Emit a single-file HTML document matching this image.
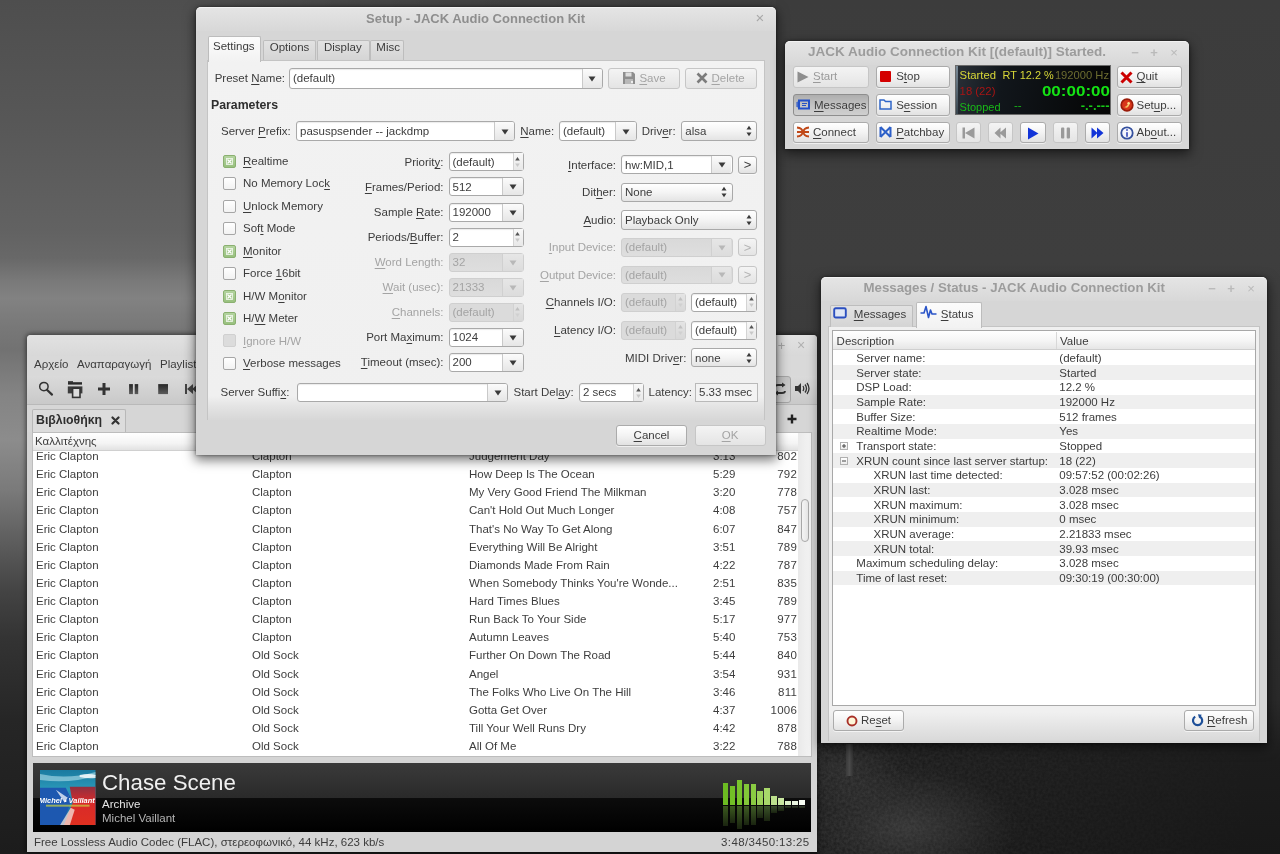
<!DOCTYPE html><html><head><meta charset="utf-8"><style>
*{margin:0;padding:0;box-sizing:border-box}
html,body{width:1280px;height:854px;overflow:hidden}
body{position:relative;font-family:"Liberation Sans",sans-serif;background:#3c3c3c}
.t{position:absolute;white-space:nowrap}
.b{position:absolute}
u{text-decoration:underline;text-decoration-thickness:1px;text-underline-offset:1.5px}
</style></head><body><div id="root" style="position:absolute;left:0;top:0;width:1280px;height:854px;overflow:hidden;filter:blur(0.35px);"><div class="b " style="left:0px;top:0px;width:1280px;height:854px;background:linear-gradient(to bottom,#4e4e4e 0,#575757 120px,#626262 230px,#686868 258px,#7a7a7a 282px,#828282 298px,#777 330px,#727272 350px,#848484 395px,#8c8c8c 440px,#7a7a7a 490px,#5e5e5e 540px,#444 590px,#333 640px,#262626 720px,#1c1c1c 854px);"></div>
<div class="b " style="left:0px;top:0px;width:1280px;height:854px;background:linear-gradient(to right,rgba(0,0,0,0) 0,rgba(0,0,0,0) 200px,rgba(0,0,0,.14) 450px,rgba(0,0,0,.2) 776px,rgba(0,0,0,.22) 1280px);"></div>
<div class="b " style="left:776px;top:0px;width:504px;height:854px;background:linear-gradient(to bottom,#3c3c3c 0,#3e3e3e 260px,#363636 480px,#2a2a2a 700px,#1c1c1c 760px,#181818 854px);"></div>
<div class="b " style="left:817px;top:743px;width:463px;height:111px;background:radial-gradient(ellipse 110px 60px at 90px 85px,rgba(85,85,85,.45),rgba(0,0,0,0)),radial-gradient(ellipse 60px 40px at 30px 30px,rgba(70,70,70,.35),rgba(0,0,0,0));"></div>
<svg class="b" style="left:817px;top:743px" width="463" height="111"><filter id="nz"><feTurbulence type="fractalNoise" baseFrequency="0.35" numOctaves="2" seed="3"/><feColorMatrix values="0 0 0 0 1  0 0 0 0 1  0 0 0 0 1  0 0 0 .5 -.1"/></filter><defs><linearGradient id="nzg" x1="0" y1="0" x2="1" y2="0"><stop offset="0" stop-color="#fff"/><stop offset=".45" stop-color="#888"/><stop offset="1" stop-color="#000"/></linearGradient><mask id="nzm"><rect width="463" height="111" fill="url(#nzg)"/></mask></defs><rect width="463" height="111" filter="url(#nz)" opacity=".25" mask="url(#nzm)"/></svg>
<div class="b " style="left:846px;top:744px;width:7px;height:32px;background:linear-gradient(to right,#3a3a3a,#4a4a4a,#333);"></div>
<div class="b " style="left:27px;top:335px;width:790px;height:516.5px;background:#d4d4d4;border-radius:4px 4px 0 0;box-shadow:0 0 5px 1px rgba(0,0,0,.55);"></div>
<div class="b " style="left:27px;top:335px;width:790px;height:21px;background:linear-gradient(#e2e2e2,#d8d8d8);border-radius:4px 4px 0 0;"></div>
<div class="t" style="top:337.00px;font-size:13px;line-height:17px;color:#a8a8a8;left:771.5px;width:20px;text-align:center;">+</div>
<div class="t" style="top:336.00px;font-size:14px;line-height:18px;color:#b0b0b0;left:791.0px;width:20px;text-align:center;">×</div>
<div class="b " style="left:27px;top:356px;width:790px;height:20px;background:#d9d9d9;"></div>
<div class="t" style="top:357.00px;font-size:11.5px;line-height:14px;color:#3c3c3c;left:34px;">Αρχείο</div>
<div class="t" style="top:357.00px;font-size:11.5px;line-height:14px;color:#3c3c3c;left:77px;">Αναπαραγωγή</div>
<div class="t" style="top:357.00px;font-size:11.5px;line-height:14px;color:#3c3c3c;left:160px;">Playlist</div>
<div class="b " style="left:27px;top:376px;width:790px;height:29px;background:linear-gradient(#dadada,#c9c9c9);border-bottom:1px solid #b9b9b9;"></div>
<svg class="b" style="left:37px;top:380px" width="18" height="18" viewBox="0 0 18 18"><circle cx="6.9" cy="6.6" r="4.2" fill="none" stroke="#333" stroke-width="1.5"/><path d="M9.9 9.8 L15 14.6" stroke="#333" stroke-width="2.2" stroke-linecap="round"/></svg>
<svg class="b" style="left:64px;top:378px" width="22" height="22" viewBox="0 0 22 22"><rect x="4" y="3.2" width="5" height="1.5" fill="#2a2a2a"/><rect x="4" y="4.2" width="14" height="2.4" fill="#2a2a2a"/><rect x="3.8" y="8.4" width="14.6" height="7" fill="#3c3c3c"/><rect x="8.6" y="10.2" width="7.4" height="9.2" fill="#dcdcdc" stroke="#333" stroke-width="1.6"/></svg>
<svg class="b" style="left:95px;top:380px" width="18" height="18" viewBox="0 0 18 18"><path d="M9 3v12M3 9h12" stroke="#333" stroke-width="3"/></svg>
<svg class="b" style="left:125px;top:380px" width="18" height="18" viewBox="0 0 18 18"><defs><linearGradient id="pg" x1="0" y1="0" x2="0" y2="1"><stop offset="0" stop-color="#262626"/><stop offset="1" stop-color="#5a5a5a"/></linearGradient></defs><rect x="4.1" y="4.1" width="3.8" height="10" fill="url(#pg)"/><rect x="9.7" y="4.1" width="3.5" height="10" fill="url(#pg)"/></svg>
<svg class="b" style="left:154px;top:380px" width="18" height="18" viewBox="0 0 18 18"><defs><linearGradient id="stg" x1="0" y1="0" x2="0" y2="1"><stop offset="0" stop-color="#282828"/><stop offset="1" stop-color="#5c5c5c"/></linearGradient></defs><rect x="4.2" y="4.1" width="9.8" height="10" fill="url(#stg)"/></svg>
<svg class="b" style="left:183px;top:380px" width="18" height="18" viewBox="0 0 18 18"><rect x="2" y="4" width="2" height="10" fill="#444"/><path d="M4 9l6-5v10z M9 9l6-5v10z" fill="#444"/></svg>
<div class="b " style="left:768px;top:375.5px;width:22.5px;height:27.5px;background:linear-gradient(#c4c4c4,#cdcdcd 70%,#d2d2d2);border:1px solid #a6a6a6;border-radius:3px;"></div>
<svg class="b" style="left:772px;top:381px" width="16" height="16" viewBox="0 0 16 16"><path d="M3 6Q3 4 6 4H11M13 10Q13 12 10 12H5" fill="none" stroke="#333" stroke-width="1.8"/><path d="M10 1.5L13.5 4L10 6.5Z M6 9.5L2.5 12L6 14.5Z" fill="#333"/></svg>
<svg class="b" style="left:794px;top:381px" width="16" height="15" viewBox="0 0 16 15"><path d="M1 5h3l3-3v11l-3-3H1z" fill="#333"/><path d="M9 5q1.5 2.5 0 5M11 3.5q3 4 0 8M13 2q4 5.5 0 11" fill="none" stroke="#333" stroke-width="1.3"/></svg>
<div class="b " style="left:27px;top:405px;width:790px;height:27px;background:#d6d6d6;"></div>
<div class="b " style="left:32px;top:409px;width:94px;height:24px;background:#dcdcdc;border:1px solid #b8b8b8;border-bottom:none;border-radius:2px 2px 0 0;"></div>
<div class="t" style="top:412.00px;font-size:12.3px;line-height:16px;color:#2e2e2e;font-weight:bold;left:36px;">Βιβλιοθήκη</div>
<svg class="b" style="left:110.5px;top:415.5px" width="9" height="9" viewBox="0 0 9 9"><path d="M1.5 1.5L7.5 7.5M7.5 1.5L1.5 7.5" stroke="#333" stroke-width="2.2" stroke-linecap="round"/></svg>
<svg class="b" style="left:786px;top:413px" width="12" height="12" viewBox="0 0 12 12"><path d="M6 1.5v9M1.5 6h9" stroke="#222" stroke-width="2.4"/></svg>
<div class="b " style="left:32px;top:432px;width:780px;height:325px;background:#fff;border:1px solid #bdbdbd;"></div>
<div class="b " style="left:33px;top:433px;width:765px;height:18px;background:linear-gradient(#ffffff,#f4f4f4 60%,#e2e2e2);border-bottom:1px solid #d0d0d0;"></div>
<div class="t" style="top:434.00px;font-size:11.5px;line-height:14px;color:#3c3c3c;left:35px;">Καλλιτέχνης</div>
<div class="t" style="top:449.00px;font-size:11.5px;line-height:14px;color:#3e3e3e;left:36px;">Eric Clapton</div>
<div class="t" style="top:449.00px;font-size:11.5px;line-height:14px;color:#3e3e3e;left:252px;">Clapton</div>
<div class="t" style="top:449.00px;font-size:11.5px;line-height:14px;color:#3e3e3e;left:469px;">Judgement Day</div>
<div class="t" style="top:449.00px;font-size:11.5px;line-height:14px;color:#3e3e3e;left:713px;">3:13</div>
<div class="t" style="top:449.00px;font-size:11.5px;line-height:14px;color:#3e3e3e;left:757px;width:40px;text-align:right;letter-spacing:0.2px;">802</div>
<div class="t" style="top:467.00px;font-size:11.5px;line-height:14px;color:#3e3e3e;left:36px;">Eric Clapton</div>
<div class="t" style="top:467.00px;font-size:11.5px;line-height:14px;color:#3e3e3e;left:252px;">Clapton</div>
<div class="t" style="top:467.00px;font-size:11.5px;line-height:14px;color:#3e3e3e;left:469px;">How Deep Is The Ocean</div>
<div class="t" style="top:467.00px;font-size:11.5px;line-height:14px;color:#3e3e3e;left:713px;">5:29</div>
<div class="t" style="top:467.00px;font-size:11.5px;line-height:14px;color:#3e3e3e;left:757px;width:40px;text-align:right;letter-spacing:0.2px;">792</div>
<div class="t" style="top:485.00px;font-size:11.5px;line-height:14px;color:#3e3e3e;left:36px;">Eric Clapton</div>
<div class="t" style="top:485.00px;font-size:11.5px;line-height:14px;color:#3e3e3e;left:252px;">Clapton</div>
<div class="t" style="top:485.00px;font-size:11.5px;line-height:14px;color:#3e3e3e;left:469px;">My Very Good Friend The Milkman</div>
<div class="t" style="top:485.00px;font-size:11.5px;line-height:14px;color:#3e3e3e;left:713px;">3:20</div>
<div class="t" style="top:485.00px;font-size:11.5px;line-height:14px;color:#3e3e3e;left:757px;width:40px;text-align:right;letter-spacing:0.2px;">778</div>
<div class="t" style="top:503.00px;font-size:11.5px;line-height:14px;color:#3e3e3e;left:36px;">Eric Clapton</div>
<div class="t" style="top:503.00px;font-size:11.5px;line-height:14px;color:#3e3e3e;left:252px;">Clapton</div>
<div class="t" style="top:503.00px;font-size:11.5px;line-height:14px;color:#3e3e3e;left:469px;">Can't Hold Out Much Longer</div>
<div class="t" style="top:503.00px;font-size:11.5px;line-height:14px;color:#3e3e3e;left:713px;">4:08</div>
<div class="t" style="top:503.00px;font-size:11.5px;line-height:14px;color:#3e3e3e;left:757px;width:40px;text-align:right;letter-spacing:0.2px;">757</div>
<div class="t" style="top:522.00px;font-size:11.5px;line-height:14px;color:#3e3e3e;left:36px;">Eric Clapton</div>
<div class="t" style="top:522.00px;font-size:11.5px;line-height:14px;color:#3e3e3e;left:252px;">Clapton</div>
<div class="t" style="top:522.00px;font-size:11.5px;line-height:14px;color:#3e3e3e;left:469px;">That's No Way To Get Along</div>
<div class="t" style="top:522.00px;font-size:11.5px;line-height:14px;color:#3e3e3e;left:713px;">6:07</div>
<div class="t" style="top:522.00px;font-size:11.5px;line-height:14px;color:#3e3e3e;left:757px;width:40px;text-align:right;letter-spacing:0.2px;">847</div>
<div class="t" style="top:540.00px;font-size:11.5px;line-height:14px;color:#3e3e3e;left:36px;">Eric Clapton</div>
<div class="t" style="top:540.00px;font-size:11.5px;line-height:14px;color:#3e3e3e;left:252px;">Clapton</div>
<div class="t" style="top:540.00px;font-size:11.5px;line-height:14px;color:#3e3e3e;left:469px;">Everything Will Be Alright</div>
<div class="t" style="top:540.00px;font-size:11.5px;line-height:14px;color:#3e3e3e;left:713px;">3:51</div>
<div class="t" style="top:540.00px;font-size:11.5px;line-height:14px;color:#3e3e3e;left:757px;width:40px;text-align:right;letter-spacing:0.2px;">789</div>
<div class="t" style="top:558.00px;font-size:11.5px;line-height:14px;color:#3e3e3e;left:36px;">Eric Clapton</div>
<div class="t" style="top:558.00px;font-size:11.5px;line-height:14px;color:#3e3e3e;left:252px;">Clapton</div>
<div class="t" style="top:558.00px;font-size:11.5px;line-height:14px;color:#3e3e3e;left:469px;">Diamonds Made From Rain</div>
<div class="t" style="top:558.00px;font-size:11.5px;line-height:14px;color:#3e3e3e;left:713px;">4:22</div>
<div class="t" style="top:558.00px;font-size:11.5px;line-height:14px;color:#3e3e3e;left:757px;width:40px;text-align:right;letter-spacing:0.2px;">787</div>
<div class="t" style="top:576.00px;font-size:11.5px;line-height:14px;color:#3e3e3e;left:36px;">Eric Clapton</div>
<div class="t" style="top:576.00px;font-size:11.5px;line-height:14px;color:#3e3e3e;left:252px;">Clapton</div>
<div class="t" style="top:576.00px;font-size:11.5px;line-height:14px;color:#3e3e3e;left:469px;">When Somebody Thinks You're Wonde...</div>
<div class="t" style="top:576.00px;font-size:11.5px;line-height:14px;color:#3e3e3e;left:713px;">2:51</div>
<div class="t" style="top:576.00px;font-size:11.5px;line-height:14px;color:#3e3e3e;left:757px;width:40px;text-align:right;letter-spacing:0.2px;">835</div>
<div class="t" style="top:594.00px;font-size:11.5px;line-height:14px;color:#3e3e3e;left:36px;">Eric Clapton</div>
<div class="t" style="top:594.00px;font-size:11.5px;line-height:14px;color:#3e3e3e;left:252px;">Clapton</div>
<div class="t" style="top:594.00px;font-size:11.5px;line-height:14px;color:#3e3e3e;left:469px;">Hard Times Blues</div>
<div class="t" style="top:594.00px;font-size:11.5px;line-height:14px;color:#3e3e3e;left:713px;">3:45</div>
<div class="t" style="top:594.00px;font-size:11.5px;line-height:14px;color:#3e3e3e;left:757px;width:40px;text-align:right;letter-spacing:0.2px;">789</div>
<div class="t" style="top:612.00px;font-size:11.5px;line-height:14px;color:#3e3e3e;left:36px;">Eric Clapton</div>
<div class="t" style="top:612.00px;font-size:11.5px;line-height:14px;color:#3e3e3e;left:252px;">Clapton</div>
<div class="t" style="top:612.00px;font-size:11.5px;line-height:14px;color:#3e3e3e;left:469px;">Run Back To Your Side</div>
<div class="t" style="top:612.00px;font-size:11.5px;line-height:14px;color:#3e3e3e;left:713px;">5:17</div>
<div class="t" style="top:612.00px;font-size:11.5px;line-height:14px;color:#3e3e3e;left:757px;width:40px;text-align:right;letter-spacing:0.2px;">977</div>
<div class="t" style="top:630.00px;font-size:11.5px;line-height:14px;color:#3e3e3e;left:36px;">Eric Clapton</div>
<div class="t" style="top:630.00px;font-size:11.5px;line-height:14px;color:#3e3e3e;left:252px;">Clapton</div>
<div class="t" style="top:630.00px;font-size:11.5px;line-height:14px;color:#3e3e3e;left:469px;">Autumn Leaves</div>
<div class="t" style="top:630.00px;font-size:11.5px;line-height:14px;color:#3e3e3e;left:713px;">5:40</div>
<div class="t" style="top:630.00px;font-size:11.5px;line-height:14px;color:#3e3e3e;left:757px;width:40px;text-align:right;letter-spacing:0.2px;">753</div>
<div class="t" style="top:648.00px;font-size:11.5px;line-height:14px;color:#3e3e3e;left:36px;">Eric Clapton</div>
<div class="t" style="top:648.00px;font-size:11.5px;line-height:14px;color:#3e3e3e;left:252px;">Old Sock</div>
<div class="t" style="top:648.00px;font-size:11.5px;line-height:14px;color:#3e3e3e;left:469px;">Further On Down The Road</div>
<div class="t" style="top:648.00px;font-size:11.5px;line-height:14px;color:#3e3e3e;left:713px;">5:44</div>
<div class="t" style="top:648.00px;font-size:11.5px;line-height:14px;color:#3e3e3e;left:757px;width:40px;text-align:right;letter-spacing:0.2px;">840</div>
<div class="t" style="top:667.00px;font-size:11.5px;line-height:14px;color:#3e3e3e;left:36px;">Eric Clapton</div>
<div class="t" style="top:667.00px;font-size:11.5px;line-height:14px;color:#3e3e3e;left:252px;">Old Sock</div>
<div class="t" style="top:667.00px;font-size:11.5px;line-height:14px;color:#3e3e3e;left:469px;">Angel</div>
<div class="t" style="top:667.00px;font-size:11.5px;line-height:14px;color:#3e3e3e;left:713px;">3:54</div>
<div class="t" style="top:667.00px;font-size:11.5px;line-height:14px;color:#3e3e3e;left:757px;width:40px;text-align:right;letter-spacing:0.2px;">931</div>
<div class="t" style="top:685.00px;font-size:11.5px;line-height:14px;color:#3e3e3e;left:36px;">Eric Clapton</div>
<div class="t" style="top:685.00px;font-size:11.5px;line-height:14px;color:#3e3e3e;left:252px;">Old Sock</div>
<div class="t" style="top:685.00px;font-size:11.5px;line-height:14px;color:#3e3e3e;left:469px;">The Folks Who Live On The Hill</div>
<div class="t" style="top:685.00px;font-size:11.5px;line-height:14px;color:#3e3e3e;left:713px;">3:46</div>
<div class="t" style="top:685.00px;font-size:11.5px;line-height:14px;color:#3e3e3e;left:757px;width:40px;text-align:right;letter-spacing:0.2px;">811</div>
<div class="t" style="top:703.00px;font-size:11.5px;line-height:14px;color:#3e3e3e;left:36px;">Eric Clapton</div>
<div class="t" style="top:703.00px;font-size:11.5px;line-height:14px;color:#3e3e3e;left:252px;">Old Sock</div>
<div class="t" style="top:703.00px;font-size:11.5px;line-height:14px;color:#3e3e3e;left:469px;">Gotta Get Over</div>
<div class="t" style="top:703.00px;font-size:11.5px;line-height:14px;color:#3e3e3e;left:713px;">4:37</div>
<div class="t" style="top:703.00px;font-size:11.5px;line-height:14px;color:#3e3e3e;left:757px;width:40px;text-align:right;letter-spacing:0.2px;">1006</div>
<div class="t" style="top:721.00px;font-size:11.5px;line-height:14px;color:#3e3e3e;left:36px;">Eric Clapton</div>
<div class="t" style="top:721.00px;font-size:11.5px;line-height:14px;color:#3e3e3e;left:252px;">Old Sock</div>
<div class="t" style="top:721.00px;font-size:11.5px;line-height:14px;color:#3e3e3e;left:469px;">Till Your Well Runs Dry</div>
<div class="t" style="top:721.00px;font-size:11.5px;line-height:14px;color:#3e3e3e;left:713px;">4:42</div>
<div class="t" style="top:721.00px;font-size:11.5px;line-height:14px;color:#3e3e3e;left:757px;width:40px;text-align:right;letter-spacing:0.2px;">878</div>
<div class="t" style="top:739.00px;font-size:11.5px;line-height:14px;color:#3e3e3e;left:36px;">Eric Clapton</div>
<div class="t" style="top:739.00px;font-size:11.5px;line-height:14px;color:#3e3e3e;left:252px;">Old Sock</div>
<div class="t" style="top:739.00px;font-size:11.5px;line-height:14px;color:#3e3e3e;left:469px;">All Of Me</div>
<div class="t" style="top:739.00px;font-size:11.5px;line-height:14px;color:#3e3e3e;left:713px;">3:22</div>
<div class="t" style="top:739.00px;font-size:11.5px;line-height:14px;color:#3e3e3e;left:757px;width:40px;text-align:right;letter-spacing:0.2px;">788</div>
<div class="b " style="left:798px;top:433px;width:13px;height:323px;background:linear-gradient(to right,#e9e9e9,#f4f4f4);"></div>
<div class="b " style="left:801px;top:499px;width:8px;height:43px;background:linear-gradient(to right,#f4f4f4,#e6e6e6);border:1px solid #a8a8a8;border-radius:4px;"></div>
<div class="b " style="left:32px;top:757px;width:780px;height:6px;background:#d4d4d4;"></div>
<div class="b " style="left:33px;top:763px;width:778px;height:69px;background:linear-gradient(#3a3a3a 0,#2a2a2a 50%,#0c0c0c 50.5%,#000 100%);"></div>
<svg class="b" style="left:40px;top:769.5px" width="55.5" height="55.5" viewBox="0 0 56 56"><defs><linearGradient id="ag" x1="0" y1="0" x2="0" y2="1"><stop offset="0" stop-color="#1a7aa0"/><stop offset=".35" stop-color="#2a98b8"/><stop offset="1" stop-color="#1a5aa0"/></linearGradient><linearGradient id="rg" x1="0" y1="0" x2="0" y2="1"><stop offset="0" stop-color="#903040"/><stop offset=".4" stop-color="#d82a2a"/><stop offset="1" stop-color="#e03020"/></linearGradient></defs><rect width="56" height="56" fill="url(#ag)"/><path d="M0 4 Q28 10 56 2 L56 6 Q30 14 0 10Z" fill="#bfe8f0" opacity=".55"/><path d="M40 5 Q50 3 56 5 L56 8 Q48 9 40 7Z" fill="#fff" opacity=".8"/><path d="M0 18 L26 18 L32 30 L22 56 L0 56Z" fill="#1d58b0"/><path d="M30 17 L56 17 L56 56 L24 56 L33 33Z" fill="url(#rg)"/><path d="M16 20 L28 28 L30 24 L25 33Z" fill="#e8eef8" opacity=".8"/><path d="M20 56 L31 38 L35 40 L30 56Z" fill="#f4e4dc" opacity=".75"/><text x="27" y="33" font-size="7.5" font-weight="bold" font-style="italic" text-anchor="middle" fill="#fff" font-family="Liberation Sans">Michel • Vaillant</text><rect x="6" y="35" width="44" height="2" fill="#c8d040" opacity=".7"/></svg>
<div class="t" style="top:769.00px;font-size:22.3px;line-height:27px;color:#f0f0f0;left:102px;">Chase Scene</div>
<div class="t" style="top:797.00px;font-size:11.5px;line-height:14px;color:#e4e4e4;left:102px;">Archive</div>
<div class="t" style="top:811.00px;font-size:11.5px;line-height:14px;color:#b4b4b4;left:102px;">Michel Vaillant</div>
<div class="b " style="left:722.8px;top:783.1px;width:5.5px;height:21.899999999999977px;background:#6cbc22;"></div>
<div class="b " style="left:722.8px;top:805.5px;width:5.5px;height:20.5px;background:linear-gradient(#3b5a1e,#1a2410);"></div>
<div class="b " style="left:729.73px;top:785.6px;width:5.5px;height:19.399999999999977px;background:#72c026;"></div>
<div class="b " style="left:729.73px;top:805.5px;width:5.5px;height:17.5px;background:linear-gradient(#3d5c20,#1a2410);"></div>
<div class="b " style="left:736.66px;top:780.3px;width:5.5px;height:24.700000000000045px;background:#78c42c;"></div>
<div class="b " style="left:736.66px;top:805.5px;width:5.5px;height:23.0px;background:linear-gradient(#3f5e22,#1a2410);"></div>
<div class="b " style="left:743.59px;top:784px;width:5.5px;height:21px;background:#82c838;"></div>
<div class="b " style="left:743.59px;top:805.5px;width:5.5px;height:19.799999999999955px;background:linear-gradient(#3f5e24,#1a2410);"></div>
<div class="b " style="left:750.52px;top:784px;width:5.5px;height:21px;background:#8acc42;"></div>
<div class="b " style="left:750.52px;top:805.5px;width:5.5px;height:19.799999999999955px;background:linear-gradient(#3f5c26,#1a2410);"></div>
<div class="b " style="left:757.45px;top:790.8px;width:5.5px;height:14.200000000000045px;background:#9cd25a;"></div>
<div class="b " style="left:757.45px;top:805.5px;width:5.5px;height:12.899999999999977px;background:linear-gradient(#3c5428,#1a2410);"></div>
<div class="b " style="left:764.38px;top:788.2px;width:5.5px;height:16.799999999999955px;background:#a8d86a;"></div>
<div class="b " style="left:764.38px;top:805.5px;width:5.5px;height:15.5px;background:linear-gradient(#3c552a,#1a2410);"></div>
<div class="b " style="left:771.31px;top:795.9px;width:5.5px;height:9.100000000000023px;background:#bce08c;"></div>
<div class="b " style="left:771.31px;top:805.5px;width:5.5px;height:7.5px;background:linear-gradient(#394a2c,#1a2410);"></div>
<div class="b " style="left:778.24px;top:797.8px;width:5.5px;height:7.2000000000000455px;background:#c8e6a0;"></div>
<div class="b " style="left:778.24px;top:805.5px;width:5.5px;height:5.5px;background:linear-gradient(#36442e,#1a2410);"></div>
<div class="b " style="left:785.17px;top:801px;width:5.5px;height:4px;background:#dcefc8;"></div>
<div class="b " style="left:785.17px;top:805.5px;width:5.5px;height:2.0px;background:linear-gradient(#333a2e,#1a2410);"></div>
<div class="b " style="left:792.1px;top:801px;width:5.5px;height:4px;background:#eaf5e0;"></div>
<div class="b " style="left:792.1px;top:805.5px;width:5.5px;height:2.0px;background:linear-gradient(#333830,#1a2410);"></div>
<div class="b " style="left:799.03px;top:800px;width:5.5px;height:5px;background:#f6fbf2;"></div>
<div class="b " style="left:799.03px;top:805.5px;width:5.5px;height:2.5px;background:linear-gradient(#353832,#1a2410);"></div>
<div class="t" style="top:835.00px;font-size:11.5px;line-height:14px;color:#3c3c3c;left:34px;">Free Lossless Audio Codec (FLAC), στερεοφωνικό, 44 kHz, 623 kb/s</div>
<div class="t" style="top:835.00px;font-size:11.5px;line-height:14px;color:#3c3c3c;left:409.5px;width:400px;text-align:right;letter-spacing:0.35px;">3:48/3450:13:25</div>
<div class="b " style="left:196px;top:7px;width:580px;height:448px;background:#d6d6d6;border-radius:5px 5px 0 0;box-shadow:0 4px 12px 1px rgba(0,0,0,.55),0 0 3px rgba(0,0,0,.5);"></div>
<div class="b " style="left:196px;top:7px;width:580px;height:24px;background:linear-gradient(#e4e4e4,#d8d8d8);border-radius:5px 5px 0 0;border-top:1px solid #f2f2f2;"></div>
<div class="t" style="top:10.00px;font-size:13px;line-height:17px;color:#8e8e8e;font-weight:bold;left:366px;">Setup - JACK Audio Connection Kit</div>
<div class="t" style="top:8.00px;font-size:15px;line-height:19px;color:#a8a8a8;left:752.0px;width:16px;text-align:center;">×</div>
<div class="b " style="left:263px;top:40px;width:53px;height:21px;background:linear-gradient(#e2e2e2,#d4d4d4);border:1px solid #bdbdbd;border-bottom:none;border-radius:2px 2px 0 0;"></div>
<div class="t" style="top:40.00px;font-size:11.5px;line-height:14px;color:#3c3c3c;left:269.7px;">Options</div>
<div class="b " style="left:317px;top:40px;width:53px;height:21px;background:linear-gradient(#e2e2e2,#d4d4d4);border:1px solid #bdbdbd;border-bottom:none;border-radius:2px 2px 0 0;"></div>
<div class="t" style="top:40.00px;font-size:11.5px;line-height:14px;color:#3c3c3c;left:324px;">Display</div>
<div class="b " style="left:370px;top:40px;width:34px;height:21px;background:linear-gradient(#e2e2e2,#d4d4d4);border:1px solid #bdbdbd;border-bottom:none;border-radius:2px 2px 0 0;"></div>
<div class="t" style="top:40.00px;font-size:11.5px;line-height:14px;color:#3c3c3c;left:376.3px;">Misc</div>
<div class="b " style="left:207px;top:60px;width:558px;height:360px;background:linear-gradient(#f2f2f2 0,#f0f0f0 335px,#e4e4e4 345px,#d6d6d6 360px);border:1px solid #c4c4c4;border-bottom:none;"></div>
<div class="b " style="left:208px;top:36px;width:53px;height:26px;background:linear-gradient(#fcfcfc,#f2f2f2);border:1px solid #bcbcbc;border-bottom:none;border-radius:2px 2px 0 0;"></div>
<div class="t" style="top:39.00px;font-size:11.5px;line-height:14px;color:#3c3c3c;left:213px;">Settings</div>
<div class="t" style="top:71.00px;font-size:11.5px;line-height:14px;color:#3c3c3c;left:214.7px;">Preset <u>N</u>ame:</div>
<div class="b " style="left:289px;top:68px;width:314px;height:20.5px;background:#fff;border:1px solid #a9a9a9;border-radius:3px;box-shadow:inset 0 1px 1px rgba(0,0,0,.08);"></div>
<div class="b " style="left:581.5px;top:69px;width:20.5px;height:18.5px;background:linear-gradient(#fbfbfb,#e6e6e6);border-left:1px solid #c9c9c9;border-radius:0 2px 2px 0;"></div>
<svg class="b" style="left:588.25px;top:75.75px" width="8" height="6" viewBox="0 0 8 6"><path d="M0.5 0.5H7.5L4.0 5.5Z" fill="#3a3a3a"/></svg>
<div class="t" style="top:71.00px;font-size:11.5px;line-height:14px;color:#3c3c3c;left:293px;">(default)</div>
<div class="b " style="left:608px;top:68px;width:72px;height:21px;background:linear-gradient(#f4f4f4,#e4e4e4);border:1px solid #c6c6c6;border-radius:3px;"></div>
<svg class="b" style="left:622px;top:71px" width="14" height="14" viewBox="0 0 14 14"><path d="M1 1h10l2 2v10H1z" fill="#8e8e8e"/><rect x="3.5" y="1.5" width="6" height="4" fill="#dedede"/><rect x="3" y="8" width="8" height="5" fill="#b8b8b8"/><rect x="9" y="10" width="2" height="2" fill="#eee"/></svg>
<div class="t" style="top:71.00px;font-size:11.5px;line-height:14px;color:#a4a4a4;left:639.4px;"><u>S</u>ave</div>
<div class="b " style="left:685px;top:68px;width:72px;height:21px;background:linear-gradient(#f4f4f4,#e4e4e4);border:1px solid #c6c6c6;border-radius:3px;"></div>
<svg class="b" style="left:696px;top:72px" width="12" height="12" viewBox="0 0 12 12"><path d="M1.5 1.5L10.5 10.5M10.5 1.5L1.5 10.5" stroke="#7c7c7c" stroke-width="2.6"/></svg>
<div class="t" style="top:71.00px;font-size:11.5px;line-height:14px;color:#a4a4a4;left:711.5px;"><u>D</u>elete</div>
<div class="t" style="top:97.00px;font-size:12.3px;line-height:16px;color:#2e2e2e;font-weight:bold;left:211px;">Parameters</div>
<div class="t" style="top:124.00px;font-size:11.5px;line-height:14px;color:#3c3c3c;left:221px;">Server <u>P</u>refix:</div>
<div class="b " style="left:296px;top:121px;width:219px;height:20px;background:#fff;border:1px solid #a9a9a9;border-radius:3px;box-shadow:inset 0 1px 1px rgba(0,0,0,.08);"></div>
<div class="b " style="left:494px;top:122px;width:20px;height:18px;background:linear-gradient(#fbfbfb,#e6e6e6);border-left:1px solid #c9c9c9;border-radius:0 2px 2px 0;"></div>
<svg class="b" style="left:500.50px;top:128.50px" width="8" height="6" viewBox="0 0 8 6"><path d="M0.5 0.5H7.5L4.0 5.5Z" fill="#3a3a3a"/></svg>
<div class="t" style="top:124.00px;font-size:11.5px;line-height:14px;color:#3c3c3c;left:300px;">pasuspsender -- jackdmp</div>
<div class="t" style="top:124.00px;font-size:11.5px;line-height:14px;color:#3c3c3c;left:520.3px;"><u>N</u>ame:</div>
<div class="b " style="left:558.5px;top:121px;width:78.0px;height:20px;background:#fff;border:1px solid #a9a9a9;border-radius:3px;box-shadow:inset 0 1px 1px rgba(0,0,0,.08);"></div>
<div class="b " style="left:615px;top:122px;width:20.5px;height:18px;background:linear-gradient(#fbfbfb,#e6e6e6);border-left:1px solid #c9c9c9;border-radius:0 2px 2px 0;"></div>
<svg class="b" style="left:621.75px;top:128.50px" width="8" height="6" viewBox="0 0 8 6"><path d="M0.5 0.5H7.5L4.0 5.5Z" fill="#3a3a3a"/></svg>
<div class="t" style="top:124.00px;font-size:11.5px;line-height:14px;color:#3c3c3c;left:563px;">(default)</div>
<div class="t" style="top:124.00px;font-size:11.5px;line-height:14px;color:#3c3c3c;left:641.7px;">Driv<u>e</u>r:</div>
<div class="b " style="left:681px;top:121px;width:76px;height:20px;background:linear-gradient(#ffffff,#f4f4f4 50%,#e4e4e4);border:1px solid #a9a9a9;border-radius:3px;"></div>
<svg class="b" style="left:744.50px;top:124.00px" width="8" height="14" viewBox="0 0 8 14"><path d="M4 1.8L6.5 5.6H1.5Z M1.5 8.4H6.5L4 12.2Z" fill="#3a3a3a"/></svg>
<div class="t" style="top:124.00px;font-size:11.5px;line-height:14px;color:#3c3c3c;left:685.3px;">alsa</div>
<div class="b " style="left:223px;top:154.5px;width:13px;height:13.0px;background:linear-gradient(#b4d4a0,#98c07e);border:1px solid #8ab070;border-radius:2px;"></div>
<svg class="b" style="left:226px;top:157.5px" width="7" height="7" viewBox="0 0 7 7"><rect x="0.5" y="0.5" width="6" height="6" fill="none" stroke="#fff" stroke-width="0.9" opacity=".8"/><path d="M1.5 1.5L5.5 5.5M5.5 1.5L1.5 5.5" stroke="#fff" stroke-width="1.2"/></svg>
<div class="t" style="top:154.00px;font-size:11.5px;line-height:14px;color:#3c3c3c;left:243px;"><u>R</u>ealtime</div>
<div class="b " style="left:223px;top:177.0px;width:13px;height:13.0px;background:linear-gradient(#ffffff,#f2f2f2);border:1px solid #a6a6a6;border-radius:2px;"></div>
<div class="t" style="top:176.00px;font-size:11.5px;line-height:14px;color:#3c3c3c;left:243px;">No Memory Loc<u>k</u></div>
<div class="b " style="left:223px;top:199.5px;width:13px;height:13.0px;background:linear-gradient(#ffffff,#f2f2f2);border:1px solid #a6a6a6;border-radius:2px;"></div>
<div class="t" style="top:199.00px;font-size:11.5px;line-height:14px;color:#3c3c3c;left:243px;"><u>U</u>nlock Memory</div>
<div class="b " style="left:223px;top:222.0px;width:13px;height:13.0px;background:linear-gradient(#ffffff,#f2f2f2);border:1px solid #a6a6a6;border-radius:2px;"></div>
<div class="t" style="top:221.00px;font-size:11.5px;line-height:14px;color:#3c3c3c;left:243px;">Sof<u>t</u> Mode</div>
<div class="b " style="left:223px;top:244.5px;width:13px;height:13.0px;background:linear-gradient(#b4d4a0,#98c07e);border:1px solid #8ab070;border-radius:2px;"></div>
<svg class="b" style="left:226px;top:247.5px" width="7" height="7" viewBox="0 0 7 7"><rect x="0.5" y="0.5" width="6" height="6" fill="none" stroke="#fff" stroke-width="0.9" opacity=".8"/><path d="M1.5 1.5L5.5 5.5M5.5 1.5L1.5 5.5" stroke="#fff" stroke-width="1.2"/></svg>
<div class="t" style="top:244.00px;font-size:11.5px;line-height:14px;color:#3c3c3c;left:243px;"><u>M</u>onitor</div>
<div class="b " style="left:223px;top:266.9px;width:13px;height:13.0px;background:linear-gradient(#ffffff,#f2f2f2);border:1px solid #a6a6a6;border-radius:2px;"></div>
<div class="t" style="top:266.00px;font-size:11.5px;line-height:14px;color:#3c3c3c;left:243px;">Force <u>1</u>6bit</div>
<div class="b " style="left:223px;top:289.5px;width:13px;height:13.0px;background:linear-gradient(#b4d4a0,#98c07e);border:1px solid #8ab070;border-radius:2px;"></div>
<svg class="b" style="left:226px;top:292.5px" width="7" height="7" viewBox="0 0 7 7"><rect x="0.5" y="0.5" width="6" height="6" fill="none" stroke="#fff" stroke-width="0.9" opacity=".8"/><path d="M1.5 1.5L5.5 5.5M5.5 1.5L1.5 5.5" stroke="#fff" stroke-width="1.2"/></svg>
<div class="t" style="top:289.00px;font-size:11.5px;line-height:14px;color:#3c3c3c;left:243px;">H/W M<u>o</u>nitor</div>
<div class="b " style="left:223px;top:311.9px;width:13px;height:13.0px;background:linear-gradient(#b4d4a0,#98c07e);border:1px solid #8ab070;border-radius:2px;"></div>
<svg class="b" style="left:226px;top:314.9px" width="7" height="7" viewBox="0 0 7 7"><rect x="0.5" y="0.5" width="6" height="6" fill="none" stroke="#fff" stroke-width="0.9" opacity=".8"/><path d="M1.5 1.5L5.5 5.5M5.5 1.5L1.5 5.5" stroke="#fff" stroke-width="1.2"/></svg>
<div class="t" style="top:311.00px;font-size:11.5px;line-height:14px;color:#3c3c3c;left:243px;">H/<u>W</u> Meter</div>
<div class="b " style="left:223px;top:334.3px;width:13px;height:13.0px;background:#dcdcdc;border:1px solid #d0d0d0;border-radius:2px;"></div>
<div class="t" style="top:334.00px;font-size:11.5px;line-height:14px;color:#a4a4a4;left:243px;"><u>I</u>gnore H/W</div>
<div class="b " style="left:223px;top:356.8px;width:13px;height:13.0px;background:linear-gradient(#ffffff,#f2f2f2);border:1px solid #a6a6a6;border-radius:2px;"></div>
<div class="t" style="top:356.00px;font-size:11.5px;line-height:14px;color:#3c3c3c;left:243px;"><u>V</u>erbose messages</div>
<div class="t" style="top:155.00px;font-size:11.5px;line-height:14px;color:#3c3c3c;left:43.5px;width:400px;text-align:right;">Priorit<u>y</u>:</div>
<div class="b " style="left:448.5px;top:152.20000000000002px;width:75.0px;height:19.19999999999999px;background:#fff;border:1px solid #a9a9a9;border-radius:3px;box-shadow:inset 0 1px 1px rgba(0,0,0,.08);"></div>
<div class="b " style="left:512.5px;top:153.20000000000002px;width:10.0px;height:17.19999999999999px;background:linear-gradient(#f8f8f8,#e8e8e8);border-left:1px solid #d4d4d4;"></div>
<svg class="b" style="left:514.00px;top:154.80px" width="7" height="14" viewBox="0 0 7 14"><path d="M3.5 2L5.8 5.4H1.2Z" fill="#555"/><path d="M1.2 8.6H5.8L3.5 12Z" fill="#c8c8c8"/></svg>
<div class="t" style="top:155.00px;font-size:11.5px;line-height:14px;color:#3c3c3c;left:452.5px;">(default)</div>
<div class="t" style="top:180.00px;font-size:11.5px;line-height:14px;color:#3c3c3c;left:43.5px;width:400px;text-align:right;"><u>F</u>rames/Period:</div>
<div class="b " style="left:448.5px;top:177.3px;width:75.0px;height:19.19999999999999px;background:#fff;border:1px solid #a9a9a9;border-radius:3px;box-shadow:inset 0 1px 1px rgba(0,0,0,.08);"></div>
<div class="b " style="left:501.5px;top:178.3px;width:21.0px;height:17.19999999999999px;background:linear-gradient(#fbfbfb,#e6e6e6);border-left:1px solid #c9c9c9;border-radius:0 2px 2px 0;"></div>
<svg class="b" style="left:508.50px;top:184.40px" width="8" height="6" viewBox="0 0 8 6"><path d="M0.5 0.5H7.5L4.0 5.5Z" fill="#3a3a3a"/></svg>
<div class="t" style="top:180.00px;font-size:11.5px;line-height:14px;color:#3c3c3c;left:452.5px;">512</div>
<div class="t" style="top:205.00px;font-size:11.5px;line-height:14px;color:#3c3c3c;left:43.5px;width:400px;text-align:right;">Sample <u>R</u>ate:</div>
<div class="b " style="left:448.5px;top:202.5px;width:75.0px;height:19.19999999999999px;background:#fff;border:1px solid #a9a9a9;border-radius:3px;box-shadow:inset 0 1px 1px rgba(0,0,0,.08);"></div>
<div class="b " style="left:501.5px;top:203.5px;width:21.0px;height:17.19999999999999px;background:linear-gradient(#fbfbfb,#e6e6e6);border-left:1px solid #c9c9c9;border-radius:0 2px 2px 0;"></div>
<svg class="b" style="left:508.50px;top:209.60px" width="8" height="6" viewBox="0 0 8 6"><path d="M0.5 0.5H7.5L4.0 5.5Z" fill="#3a3a3a"/></svg>
<div class="t" style="top:205.00px;font-size:11.5px;line-height:14px;color:#3c3c3c;left:452.5px;">192000</div>
<div class="t" style="top:230.00px;font-size:11.5px;line-height:14px;color:#3c3c3c;left:43.5px;width:400px;text-align:right;">Periods/<u>B</u>uffer:</div>
<div class="b " style="left:448.5px;top:227.70000000000002px;width:75.0px;height:19.19999999999999px;background:#fff;border:1px solid #a9a9a9;border-radius:3px;box-shadow:inset 0 1px 1px rgba(0,0,0,.08);"></div>
<div class="b " style="left:512.5px;top:228.70000000000002px;width:10.0px;height:17.19999999999999px;background:linear-gradient(#f8f8f8,#e8e8e8);border-left:1px solid #d4d4d4;"></div>
<svg class="b" style="left:514.00px;top:230.30px" width="7" height="14" viewBox="0 0 7 14"><path d="M3.5 2L5.8 5.4H1.2Z" fill="#555"/><path d="M1.2 8.6H5.8L3.5 12Z" fill="#c8c8c8"/></svg>
<div class="t" style="top:230.00px;font-size:11.5px;line-height:14px;color:#3c3c3c;left:452.5px;">2</div>
<div class="t" style="top:255.00px;font-size:11.5px;line-height:14px;color:#a4a4a4;left:43.5px;width:400px;text-align:right;"><u>W</u>ord Length:</div>
<div class="b " style="left:448.5px;top:252.70000000000002px;width:75.0px;height:19.200000000000017px;background:linear-gradient(#d9d9d9,#dedede);border:1px solid #cfcfcf;border-radius:3px;"></div>
<div class="b " style="left:501.5px;top:253.70000000000002px;width:21.0px;height:17.200000000000017px;background:linear-gradient(#e6e6e6,#dcdcdc);border-left:1px solid #d0d0d0;"></div>
<svg class="b" style="left:508.50px;top:259.80px" width="8" height="6" viewBox="0 0 8 6"><path d="M0.5 0.5H7.5L4.0 5.5Z" fill="#b8b8b8"/></svg>
<div class="t" style="top:255.00px;font-size:11.5px;line-height:14px;color:#a4a4a4;left:452.5px;">32</div>
<div class="t" style="top:280.00px;font-size:11.5px;line-height:14px;color:#a4a4a4;left:43.5px;width:400px;text-align:right;"><u>W</u>ait (usec):</div>
<div class="b " style="left:448.5px;top:277.7px;width:75.0px;height:19.200000000000045px;background:linear-gradient(#d9d9d9,#dedede);border:1px solid #cfcfcf;border-radius:3px;"></div>
<div class="b " style="left:501.5px;top:278.7px;width:21.0px;height:17.200000000000045px;background:linear-gradient(#e6e6e6,#dcdcdc);border-left:1px solid #d0d0d0;"></div>
<svg class="b" style="left:508.50px;top:284.80px" width="8" height="6" viewBox="0 0 8 6"><path d="M0.5 0.5H7.5L4.0 5.5Z" fill="#b8b8b8"/></svg>
<div class="t" style="top:280.00px;font-size:11.5px;line-height:14px;color:#a4a4a4;left:452.5px;">21333</div>
<div class="t" style="top:305.00px;font-size:11.5px;line-height:14px;color:#a4a4a4;left:43.5px;width:400px;text-align:right;"><u>C</u>hannels:</div>
<div class="b " style="left:448.5px;top:302.7px;width:75.0px;height:19.200000000000045px;background:#dbdbdb;border:1px solid #cfcfcf;border-radius:3px;"></div>
<div class="b " style="left:512.5px;top:303.7px;width:10.0px;height:17.200000000000045px;background:linear-gradient(#e4e4e4,#d8d8d8);border-left:1px solid #d2d2d2;"></div>
<svg class="b" style="left:514.00px;top:305.30px" width="7" height="14" viewBox="0 0 7 14"><path d="M3.5 2L5.8 5.4H1.2Z" fill="#c0c0c0"/><path d="M1.2 8.6H5.8L3.5 12Z" fill="#d0d0d0"/></svg>
<div class="t" style="top:305.00px;font-size:11.5px;line-height:14px;color:#a4a4a4;left:452.5px;">(default)</div>
<div class="t" style="top:330.00px;font-size:11.5px;line-height:14px;color:#3c3c3c;left:43.5px;width:400px;text-align:right;">Port Ma<u>x</u>imum:</div>
<div class="b " style="left:448.5px;top:327.7px;width:75.0px;height:19.200000000000045px;background:#fff;border:1px solid #a9a9a9;border-radius:3px;box-shadow:inset 0 1px 1px rgba(0,0,0,.08);"></div>
<div class="b " style="left:501.5px;top:328.7px;width:21.0px;height:17.200000000000045px;background:linear-gradient(#fbfbfb,#e6e6e6);border-left:1px solid #c9c9c9;border-radius:0 2px 2px 0;"></div>
<svg class="b" style="left:508.50px;top:334.80px" width="8" height="6" viewBox="0 0 8 6"><path d="M0.5 0.5H7.5L4.0 5.5Z" fill="#3a3a3a"/></svg>
<div class="t" style="top:330.00px;font-size:11.5px;line-height:14px;color:#3c3c3c;left:452.5px;">1024</div>
<div class="t" style="top:355.00px;font-size:11.5px;line-height:14px;color:#3c3c3c;left:43.5px;width:400px;text-align:right;"><u>T</u>imeout (msec):</div>
<div class="b " style="left:448.5px;top:352.59999999999997px;width:75.0px;height:19.200000000000045px;background:#fff;border:1px solid #a9a9a9;border-radius:3px;box-shadow:inset 0 1px 1px rgba(0,0,0,.08);"></div>
<div class="b " style="left:501.5px;top:353.59999999999997px;width:21.0px;height:17.200000000000045px;background:linear-gradient(#fbfbfb,#e6e6e6);border-left:1px solid #c9c9c9;border-radius:0 2px 2px 0;"></div>
<svg class="b" style="left:508.50px;top:359.70px" width="8" height="6" viewBox="0 0 8 6"><path d="M0.5 0.5H7.5L4.0 5.5Z" fill="#3a3a3a"/></svg>
<div class="t" style="top:355.00px;font-size:11.5px;line-height:14px;color:#3c3c3c;left:452.5px;">200</div>
<div class="t" style="top:158.00px;font-size:11.5px;line-height:14px;color:#3c3c3c;left:216px;width:400px;text-align:right;"><u>I</u>nterface:</div>
<div class="b " style="left:621px;top:155.4px;width:111.5px;height:18.80000000000001px;background:#fff;border:1px solid #a9a9a9;border-radius:3px;box-shadow:inset 0 1px 1px rgba(0,0,0,.08);"></div>
<div class="b " style="left:710.8px;top:156.4px;width:20.700000000000045px;height:16.80000000000001px;background:linear-gradient(#fbfbfb,#e6e6e6);border-left:1px solid #c9c9c9;border-radius:0 2px 2px 0;"></div>
<svg class="b" style="left:717.65px;top:162.30px" width="8" height="6" viewBox="0 0 8 6"><path d="M0.5 0.5H7.5L4.0 5.5Z" fill="#3a3a3a"/></svg>
<div class="t" style="top:158.00px;font-size:11.5px;line-height:14px;color:#3c3c3c;left:625px;">hw:MID,1</div>
<div class="b " style="left:738px;top:155.8px;width:19px;height:18.0px;background:linear-gradient(#ffffff,#f3f3f3 50%,#e2e2e2);border:1px solid #ababab;border-radius:3px;box-shadow:0 1px 0 rgba(255,255,255,.6);"></div>
<div class="t" style="top:156.00px;font-size:13px;line-height:17px;color:#3c3c3c;left:737.5px;width:20px;text-align:center;">&gt;</div>
<div class="t" style="top:185.00px;font-size:11.5px;line-height:14px;color:#3c3c3c;left:216px;width:400px;text-align:right;">Dit<u>h</u>er:</div>
<div class="b " style="left:621px;top:182.8px;width:111.5px;height:19.0px;background:linear-gradient(#ffffff,#f4f4f4 50%,#e4e4e4);border:1px solid #a9a9a9;border-radius:3px;"></div>
<svg class="b" style="left:720.00px;top:185.30px" width="8" height="14" viewBox="0 0 8 14"><path d="M4 1.8L6.5 5.6H1.5Z M1.5 8.4H6.5L4 12.2Z" fill="#3a3a3a"/></svg>
<div class="t" style="top:185.00px;font-size:11.5px;line-height:14px;color:#3c3c3c;left:625px;">None</div>
<div class="t" style="top:213.00px;font-size:11.5px;line-height:14px;color:#3c3c3c;left:216px;width:400px;text-align:right;"><u>A</u>udio:</div>
<div class="b " style="left:621px;top:210.2px;width:136px;height:19.600000000000023px;background:linear-gradient(#ffffff,#f4f4f4 50%,#e4e4e4);border:1px solid #a9a9a9;border-radius:3px;"></div>
<svg class="b" style="left:744.50px;top:213.00px" width="8" height="14" viewBox="0 0 8 14"><path d="M4 1.8L6.5 5.6H1.5Z M1.5 8.4H6.5L4 12.2Z" fill="#3a3a3a"/></svg>
<div class="t" style="top:213.00px;font-size:11.5px;line-height:14px;color:#3c3c3c;left:625px;">Playback Only</div>
<div class="t" style="top:240.00px;font-size:11.5px;line-height:14px;color:#a4a4a4;left:216px;width:400px;text-align:right;"><u>I</u>nput Device:</div>
<div class="b " style="left:621px;top:237.9px;width:111.5px;height:18.799999999999983px;background:linear-gradient(#d9d9d9,#dedede);border:1px solid #cfcfcf;border-radius:3px;"></div>
<div class="b " style="left:710.8px;top:238.9px;width:20.700000000000045px;height:16.799999999999983px;background:linear-gradient(#e6e6e6,#dcdcdc);border-left:1px solid #d0d0d0;"></div>
<svg class="b" style="left:717.65px;top:244.80px" width="8" height="6" viewBox="0 0 8 6"><path d="M0.5 0.5H7.5L4.0 5.5Z" fill="#b8b8b8"/></svg>
<div class="t" style="top:240.00px;font-size:11.5px;line-height:14px;color:#a4a4a4;left:625px;">(default)</div>
<div class="b " style="left:738px;top:238.3px;width:19px;height:18.0px;background:linear-gradient(#f4f4f4,#e4e4e4);border:1px solid #c6c6c6;border-radius:3px;"></div>
<div class="t" style="top:239.00px;font-size:13px;line-height:17px;color:#b4b4b4;left:737.5px;width:20px;text-align:center;">&gt;</div>
<div class="t" style="top:268.00px;font-size:11.5px;line-height:14px;color:#a4a4a4;left:216px;width:400px;text-align:right;"><u>O</u>utput Device:</div>
<div class="b " style="left:621px;top:265.5px;width:111.5px;height:18.799999999999955px;background:linear-gradient(#d9d9d9,#dedede);border:1px solid #cfcfcf;border-radius:3px;"></div>
<div class="b " style="left:710.8px;top:266.5px;width:20.700000000000045px;height:16.799999999999955px;background:linear-gradient(#e6e6e6,#dcdcdc);border-left:1px solid #d0d0d0;"></div>
<svg class="b" style="left:717.65px;top:272.40px" width="8" height="6" viewBox="0 0 8 6"><path d="M0.5 0.5H7.5L4.0 5.5Z" fill="#b8b8b8"/></svg>
<div class="t" style="top:268.00px;font-size:11.5px;line-height:14px;color:#a4a4a4;left:625px;">(default)</div>
<div class="b " style="left:738px;top:265.9px;width:19px;height:18.0px;background:linear-gradient(#f4f4f4,#e4e4e4);border:1px solid #c6c6c6;border-radius:3px;"></div>
<div class="t" style="top:266.00px;font-size:13px;line-height:17px;color:#b4b4b4;left:737.5px;width:20px;text-align:center;">&gt;</div>
<div class="t" style="top:295.00px;font-size:11.5px;line-height:14px;color:#3c3c3c;left:216px;width:400px;text-align:right;"><u>C</u>hannels I/O:</div>
<div class="b " style="left:621px;top:292.9px;width:65px;height:19.0px;background:#dbdbdb;border:1px solid #cfcfcf;border-radius:3px;"></div>
<div class="b " style="left:675px;top:293.9px;width:10px;height:17.0px;background:linear-gradient(#e4e4e4,#d8d8d8);border-left:1px solid #d2d2d2;"></div>
<svg class="b" style="left:676.50px;top:295.40px" width="7" height="14" viewBox="0 0 7 14"><path d="M3.5 2L5.8 5.4H1.2Z" fill="#c0c0c0"/><path d="M1.2 8.6H5.8L3.5 12Z" fill="#d0d0d0"/></svg>
<div class="t" style="top:295.00px;font-size:11.5px;line-height:14px;color:#a4a4a4;left:625px;">(default)</div>
<div class="b " style="left:691px;top:292.9px;width:66px;height:19.0px;background:#fff;border:1px solid #a9a9a9;border-radius:3px;box-shadow:inset 0 1px 1px rgba(0,0,0,.08);"></div>
<div class="b " style="left:746px;top:293.9px;width:10px;height:17.0px;background:linear-gradient(#f8f8f8,#e8e8e8);border-left:1px solid #d4d4d4;"></div>
<svg class="b" style="left:747.50px;top:295.40px" width="7" height="14" viewBox="0 0 7 14"><path d="M3.5 2L5.8 5.4H1.2Z" fill="#555"/><path d="M1.2 8.6H5.8L3.5 12Z" fill="#c8c8c8"/></svg>
<div class="t" style="top:295.00px;font-size:11.5px;line-height:14px;color:#3c3c3c;left:695px;">(default)</div>
<div class="t" style="top:323.00px;font-size:11.5px;line-height:14px;color:#3c3c3c;left:216px;width:400px;text-align:right;"><u>L</u>atency I/O:</div>
<div class="b " style="left:621px;top:320.7px;width:65px;height:19.0px;background:#dbdbdb;border:1px solid #cfcfcf;border-radius:3px;"></div>
<div class="b " style="left:675px;top:321.7px;width:10px;height:17.0px;background:linear-gradient(#e4e4e4,#d8d8d8);border-left:1px solid #d2d2d2;"></div>
<svg class="b" style="left:676.50px;top:323.20px" width="7" height="14" viewBox="0 0 7 14"><path d="M3.5 2L5.8 5.4H1.2Z" fill="#c0c0c0"/><path d="M1.2 8.6H5.8L3.5 12Z" fill="#d0d0d0"/></svg>
<div class="t" style="top:323.00px;font-size:11.5px;line-height:14px;color:#a4a4a4;left:625px;">(default)</div>
<div class="b " style="left:691px;top:320.7px;width:66px;height:19.0px;background:#fff;border:1px solid #a9a9a9;border-radius:3px;box-shadow:inset 0 1px 1px rgba(0,0,0,.08);"></div>
<div class="b " style="left:746px;top:321.7px;width:10px;height:17.0px;background:linear-gradient(#f8f8f8,#e8e8e8);border-left:1px solid #d4d4d4;"></div>
<svg class="b" style="left:747.50px;top:323.20px" width="7" height="14" viewBox="0 0 7 14"><path d="M3.5 2L5.8 5.4H1.2Z" fill="#555"/><path d="M1.2 8.6H5.8L3.5 12Z" fill="#c8c8c8"/></svg>
<div class="t" style="top:323.00px;font-size:11.5px;line-height:14px;color:#3c3c3c;left:695px;">(default)</div>
<div class="t" style="top:351.00px;font-size:11.5px;line-height:14px;color:#3c3c3c;left:286.4px;width:400px;text-align:right;">MIDI Driv<u>e</u>r:</div>
<div class="b " style="left:691px;top:348.3px;width:66px;height:19.0px;background:linear-gradient(#ffffff,#f4f4f4 50%,#e4e4e4);border:1px solid #a9a9a9;border-radius:3px;"></div>
<svg class="b" style="left:744.50px;top:350.80px" width="8" height="14" viewBox="0 0 8 14"><path d="M4 1.8L6.5 5.6H1.5Z M1.5 8.4H6.5L4 12.2Z" fill="#3a3a3a"/></svg>
<div class="t" style="top:351.00px;font-size:11.5px;line-height:14px;color:#3c3c3c;left:695px;">none</div>
<div class="t" style="top:385.00px;font-size:11.5px;line-height:14px;color:#3c3c3c;left:220.5px;">Server Suffi<u>x</u>:</div>
<div class="b " style="left:297px;top:383px;width:211px;height:19px;background:#fff;border:1px solid #a9a9a9;border-radius:3px;box-shadow:inset 0 1px 1px rgba(0,0,0,.08);"></div>
<div class="b " style="left:487px;top:384px;width:20px;height:17px;background:linear-gradient(#fbfbfb,#e6e6e6);border-left:1px solid #c9c9c9;border-radius:0 2px 2px 0;"></div>
<svg class="b" style="left:493.50px;top:390.00px" width="8" height="6" viewBox="0 0 8 6"><path d="M0.5 0.5H7.5L4.0 5.5Z" fill="#3a3a3a"/></svg>
<div class="t" style="top:385.00px;font-size:11.5px;line-height:14px;color:#3c3c3c;left:513.5px;">Start Del<u>a</u>y:</div>
<div class="b " style="left:578.5px;top:383px;width:65.5px;height:19px;background:#fff;border:1px solid #a9a9a9;border-radius:3px;box-shadow:inset 0 1px 1px rgba(0,0,0,.08);"></div>
<div class="b " style="left:633px;top:384px;width:10px;height:17px;background:linear-gradient(#f8f8f8,#e8e8e8);border-left:1px solid #d4d4d4;"></div>
<svg class="b" style="left:634.50px;top:385.50px" width="7" height="14" viewBox="0 0 7 14"><path d="M3.5 2L5.8 5.4H1.2Z" fill="#555"/><path d="M1.2 8.6H5.8L3.5 12Z" fill="#c8c8c8"/></svg>
<div class="t" style="top:385.00px;font-size:11.5px;line-height:14px;color:#3c3c3c;left:583px;">2 secs</div>
<div class="t" style="top:385.00px;font-size:11.5px;line-height:14px;color:#3c3c3c;left:648.5px;">Latency:</div>
<div class="b " style="left:695px;top:382.5px;width:63px;height:19.5px;background:#f3f3f3;border:1px solid #b9b9b9;"></div>
<div class="t" style="top:385.00px;font-size:11.5px;line-height:14px;color:#3c3c3c;left:699px;">5.33 msec</div>
<div class="b " style="left:616px;top:424.5px;width:71px;height:21.0px;background:linear-gradient(#ffffff,#f3f3f3 50%,#e2e2e2);border:1px solid #ababab;border-radius:3px;box-shadow:0 1px 0 rgba(255,255,255,.6);"></div>
<div class="t" style="top:428.00px;font-size:11.5px;line-height:14px;color:#3c3c3c;left:596.0px;width:111px;text-align:center;"><u>C</u>ancel</div>
<div class="b " style="left:694.5px;top:424.5px;width:71.0px;height:21.0px;background:linear-gradient(#f4f4f4,#e4e4e4);border:1px solid #c6c6c6;border-radius:3px;"></div>
<div class="t" style="top:428.00px;font-size:11.5px;line-height:14px;color:#a4a4a4;left:674.5px;width:111.0px;text-align:center;"><u>O</u>K</div>
<div class="b " style="left:785px;top:41px;width:404px;height:108px;background:#d6d6d6;border-radius:5px 5px 0 0;box-shadow:0 4px 12px 1px rgba(0,0,0,.55),0 0 3px rgba(0,0,0,.5);"></div>
<div class="b " style="left:785px;top:41px;width:404px;height:24px;background:linear-gradient(#e4e4e4,#d8d8d8);border-radius:5px 5px 0 0;border-top:1px solid #f2f2f2;"></div>
<div class="t" style="top:43.00px;font-size:13.5px;line-height:17px;color:#9c9c9c;font-weight:bold;left:808px;">JACK Audio Connection Kit [(default)] Started.</div>
<div class="t" style="top:44.00px;font-size:13px;line-height:17px;color:#bababa;font-weight:bold;left:1127.0px;width:16px;text-align:center;">−</div>
<div class="t" style="top:44.00px;font-size:13px;line-height:17px;color:#bababa;font-weight:bold;left:1146.0px;width:16px;text-align:center;">+</div>
<div class="t" style="top:44.00px;font-size:13px;line-height:17px;color:#bababa;left:1166.0px;width:16px;text-align:center;">×</div>
<div class="b " style="left:793px;top:66px;width:76px;height:21.5px;background:linear-gradient(#f4f4f4,#e4e4e4);border:1px solid #c6c6c6;border-radius:3px;"></div>
<svg class="b" style="left:797px;top:71px" width="12" height="12" viewBox="0 0 12 12"><path d="M0.5 0.5L11.5 6L0.5 11.5Z" fill="#8e8e8e"/></svg>
<div class="t" style="top:69.00px;font-size:11.5px;line-height:14px;color:#9a9a9a;left:813px;"><u>S</u>tart</div>
<div class="b " style="left:875.5px;top:66px;width:74.0px;height:21.5px;background:linear-gradient(#ffffff,#f3f3f3 50%,#e2e2e2);border:1px solid #ababab;border-radius:3px;box-shadow:0 1px 0 rgba(255,255,255,.6);"></div>
<div class="b " style="left:880px;top:71px;width:11px;height:11px;background:#d40000;border-radius:1px;"></div>
<div class="t" style="top:69.00px;font-size:11.5px;line-height:14px;color:#3c3c3c;left:896.2px;">S<u>t</u>op</div>
<div class="b " style="left:793px;top:93.5px;width:76px;height:22.0px;background:linear-gradient(#aeaeae,#c6c6c6 60%,#cfcfcf);border:1px solid #8e8e8e;border-radius:3px;"></div>
<svg class="b" style="left:796px;top:98px" width="15" height="13" viewBox="0 0 15 13"><rect x="3" y="2.5" width="10" height="8" fill="none" stroke="#2250c8" stroke-width="2"/><path d="M1 4v5M2 3.5v6" stroke="#2250c8" stroke-width="1"/><path d="M6 5.5h5M6 7.5h4" stroke="#2250c8" stroke-width="1.2"/></svg>
<div class="t" style="top:98.00px;font-size:11.5px;line-height:14px;color:#3c3c3c;left:814px;"><u>M</u>essages</div>
<div class="b " style="left:875.5px;top:93.5px;width:74.0px;height:22.0px;background:linear-gradient(#ffffff,#f3f3f3 50%,#e2e2e2);border:1px solid #ababab;border-radius:3px;box-shadow:0 1px 0 rgba(255,255,255,.6);"></div>
<svg class="b" style="left:879px;top:98px" width="13" height="12" viewBox="0 0 13 12"><path d="M1 2h4l1.5 1.5H12V11H1Z" fill="none" stroke="#2f66c8" stroke-width="1.5"/></svg>
<div class="t" style="top:98.00px;font-size:11.5px;line-height:14px;color:#3c3c3c;left:896.2px;">S<u>e</u>ssion</div>
<div class="b " style="left:793px;top:121.5px;width:76px;height:21.80000000000001px;background:linear-gradient(#ffffff,#f3f3f3 50%,#e2e2e2);border:1px solid #ababab;border-radius:3px;box-shadow:0 1px 0 rgba(255,255,255,.6);"></div>
<svg class="b" style="left:796px;top:126px" width="14" height="12" viewBox="0 0 14 12"><path d="M1 1.5Q6.5 2 6.5 6Q6.5 10 1 10.5M13 1.5Q7.5 2 7.5 6Q7.5 10 13 10.5M1 6H13" fill="none" stroke="#c04818" stroke-width="1.9"/></svg>
<div class="t" style="top:125.00px;font-size:11.5px;line-height:14px;color:#3c3c3c;left:813px;"><u>C</u>onnect</div>
<div class="b " style="left:875.5px;top:121.5px;width:74.0px;height:21.80000000000001px;background:linear-gradient(#ffffff,#f3f3f3 50%,#e2e2e2);border:1px solid #ababab;border-radius:3px;box-shadow:0 1px 0 rgba(255,255,255,.6);"></div>
<svg class="b" style="left:879px;top:126px" width="13" height="12" viewBox="0 0 13 12"><path d="M1.5 1v10M11.5 1v10M1.5 1L11.5 11M11.5 1L1.5 11" fill="none" stroke="#2c5fc8" stroke-width="2"/></svg>
<div class="t" style="top:125.00px;font-size:11.5px;line-height:14px;color:#3c3c3c;left:896.2px;"><u>P</u>atchbay</div>
<div class="b " style="left:955.3px;top:65.4px;width:155.5px;height:50.0px;background:linear-gradient(100deg,#2a3038 0,#11161b 30%,#050505 100%);border:1px solid #6a6a6a;"></div>
<div class="b " style="left:956.3px;top:66.4px;width:1.7000000000000455px;height:48.0px;background:linear-gradient(#9cb0c0,#40505a);opacity:.7;"></div>
<div class="t" style="top:68.00px;font-size:11.3px;line-height:14px;color:#d8d838;left:959.6px;">Started</div>
<div class="t" style="top:68.00px;font-size:10.9px;line-height:14px;color:#d8d838;left:1002.6px;">RT 12.2 %</div>
<div class="t" style="top:68.00px;font-size:11.2px;line-height:14px;color:#6c6c30;left:709px;width:400px;text-align:right;">192000 Hz</div>
<div class="t" style="top:84.00px;font-size:11.3px;line-height:14px;color:#a81414;left:959.6px;">18 (22)</div>
<div class="t" style="top:81.00px;font-size:15.2px;line-height:19px;color:#14e214;font-weight:bold;left:709.5px;width:400px;text-align:right;transform:scaleX(1.12);transform-origin:100% 50%;">00:00:00</div>
<div class="t" style="top:100.00px;font-size:11px;line-height:14px;color:#18b818;left:959.6px;">Stopped</div>
<div class="t" style="top:98.00px;font-size:11.5px;line-height:14px;color:#18b818;left:1014px;">--</div>
<div class="t" style="top:97.00px;font-size:13px;line-height:17px;color:#18c818;font-weight:bold;left:709.5px;width:400px;text-align:right;">-.-.---</div>
<div class="b " style="left:955.7px;top:122px;width:25.299999999999955px;height:21.30000000000001px;background:linear-gradient(#f4f4f4,#e4e4e4);border:1px solid #c6c6c6;border-radius:3px;"></div>
<div class="b " style="left:987.7px;top:122px;width:25.5px;height:21.30000000000001px;background:linear-gradient(#f4f4f4,#e4e4e4);border:1px solid #c6c6c6;border-radius:3px;"></div>
<div class="b " style="left:1019.9px;top:122px;width:26.399999999999977px;height:21.30000000000001px;background:linear-gradient(#ffffff,#f3f3f3 50%,#e2e2e2);border:1px solid #ababab;border-radius:3px;box-shadow:0 1px 0 rgba(255,255,255,.6);"></div>
<div class="b " style="left:1052.8px;top:122px;width:25.5px;height:21.30000000000001px;background:linear-gradient(#f4f4f4,#e4e4e4);border:1px solid #c6c6c6;border-radius:3px;"></div>
<div class="b " style="left:1084.6px;top:122px;width:25.800000000000182px;height:21.30000000000001px;background:linear-gradient(#ffffff,#f3f3f3 50%,#e2e2e2);border:1px solid #ababab;border-radius:3px;box-shadow:0 1px 0 rgba(255,255,255,.6);"></div>
<svg class="b" style="left:962px;top:127px" width="13" height="12" viewBox="0 0 13 12"><rect x="0.5" y="0.5" width="2.5" height="11" fill="#9a9a9a"/><path d="M3 6L12.5 0.5V11.5Z" fill="#9a9a9a"/></svg>
<svg class="b" style="left:994px;top:127px" width="13" height="12" viewBox="0 0 13 12"><path d="M0.5 6L6.5 0.5V11.5Z M5.5 6L12 0.5V11.5Z" fill="#9a9a9a"/></svg>
<svg class="b" style="left:1027px;top:126.5px" width="12" height="13" viewBox="0 0 12 13"><path d="M1 0.5L11.5 6.5L1 12.5Z" fill="#1234d8"/></svg>
<svg class="b" style="left:1060px;top:127px" width="11" height="12" viewBox="0 0 11 12"><rect x="1" y="0.5" width="3.3" height="11" rx="1" fill="#9a9a9a"/><rect x="6.7" y="0.5" width="3.3" height="11" rx="1" fill="#9a9a9a"/></svg>
<svg class="b" style="left:1091px;top:127px" width="13" height="12" viewBox="0 0 13 12"><path d="M0.5 0.5L6.5 6L0.5 11.5Z M6 0.5L12.5 6L6 11.5Z" fill="#1234d8"/></svg>
<div class="b " style="left:1116.5px;top:66px;width:65.70000000000005px;height:21.5px;background:linear-gradient(#ffffff,#f3f3f3 50%,#e2e2e2);border:1px solid #ababab;border-radius:3px;box-shadow:0 1px 0 rgba(255,255,255,.6);"></div>
<svg class="b" style="left:1120px;top:70.5px" width="13" height="13" viewBox="0 0 13 13"><path d="M1.5 1.5L11.5 11.5M11.5 1.5L1.5 11.5" stroke="#cc0000" stroke-width="3"/></svg>
<div class="t" style="top:69.00px;font-size:11.5px;line-height:14px;color:#3c3c3c;left:1136.5px;"><u>Q</u>uit</div>
<div class="b " style="left:1116.5px;top:94px;width:65.70000000000005px;height:21.5px;background:linear-gradient(#ffffff,#f3f3f3 50%,#e2e2e2);border:1px solid #ababab;border-radius:3px;box-shadow:0 1px 0 rgba(255,255,255,.6);"></div>
<svg class="b" style="left:1119.5px;top:97.5px" width="14" height="14" viewBox="0 0 14 14"><circle cx="7" cy="7" r="5.8" fill="#d8361a" stroke="#9a1c0a" stroke-width="1.7"/><path d="M4.2 9.2Q6.5 8.8 7.8 6.2L9.8 4.6Q9.6 8.6 6.8 9.8Z" fill="#f4c060"/><circle cx="8.6" cy="5.2" r="1.2" fill="#ffe090"/></svg>
<div class="t" style="top:98.00px;font-size:11.5px;line-height:14px;color:#3c3c3c;left:1136.5px;">Set<u>u</u>p...</div>
<div class="b " style="left:1116.5px;top:122px;width:65.70000000000005px;height:21.30000000000001px;background:linear-gradient(#ffffff,#f3f3f3 50%,#e2e2e2);border:1px solid #ababab;border-radius:3px;box-shadow:0 1px 0 rgba(255,255,255,.6);"></div>
<svg class="b" style="left:1119.5px;top:126px" width="14" height="14" viewBox="0 0 14 14"><circle cx="7" cy="7" r="5.7" fill="#f4f6fc" stroke="#34509e" stroke-width="1.8"/><rect x="6.1" y="6.2" width="1.8" height="4.6" fill="#4a5cc0"/><circle cx="7" cy="4.1" r="1" fill="#4a5cc0"/></svg>
<div class="t" style="top:125.00px;font-size:11.5px;line-height:14px;color:#3c3c3c;left:1136.5px;">Ab<u>o</u>ut...</div>
<div class="b " style="left:821px;top:277px;width:446px;height:466px;background:#d6d6d6;border-radius:5px 5px 0 0;box-shadow:0 4px 12px 1px rgba(0,0,0,.55),0 0 3px rgba(0,0,0,.5);"></div>
<div class="b " style="left:821px;top:277px;width:446px;height:24px;background:linear-gradient(#e4e4e4,#d8d8d8);border-radius:5px 5px 0 0;border-top:1px solid #f2f2f2;"></div>
<div class="t" style="top:279.00px;font-size:13.25px;line-height:17px;color:#9c9c9c;font-weight:bold;left:863.5px;">Messages / Status - JACK Audio Connection Kit</div>
<div class="t" style="top:280.00px;font-size:13px;line-height:17px;color:#bababa;font-weight:bold;left:1204.0px;width:16px;text-align:center;">−</div>
<div class="t" style="top:280.00px;font-size:13px;line-height:17px;color:#bababa;font-weight:bold;left:1223.0px;width:16px;text-align:center;">+</div>
<div class="t" style="top:280.00px;font-size:13px;line-height:17px;color:#bababa;left:1243.0px;width:16px;text-align:center;">×</div>
<div class="b " style="left:828px;top:326px;width:432px;height:415px;background:linear-gradient(#f0f0f0 0,#f0f0f0 385px,#e4e4e4 400px,#d8d8d8 415px);border:1px solid #c4c4c4;border-bottom:none;"></div>
<div class="b " style="left:829.5px;top:305px;width:83.5px;height:22px;background:linear-gradient(#e2e2e2,#d4d4d4);border:1px solid #bdbdbd;border-bottom:none;border-radius:2px 2px 0 0;"></div>
<svg class="b" style="left:833px;top:307px" width="14" height="12" viewBox="0 0 14 12"><rect x="1.2" y="1.2" width="11.6" height="9.3" rx="1.5" fill="#dfe6f4" stroke="#2b4fc0" stroke-width="1.9"/></svg>
<div class="t" style="top:307.00px;font-size:11.5px;line-height:14px;color:#3c3c3c;left:853.8px;"><u>M</u>essages</div>
<div class="b " style="left:916.3px;top:302px;width:65.70000000000005px;height:26px;background:linear-gradient(#fcfcfc,#f2f2f2);border:1px solid #bcbcbc;border-bottom:none;border-radius:2px 2px 0 0;"></div>
<svg class="b" style="left:920px;top:305px" width="17" height="14" viewBox="0 0 17 14"><path d="M0.5 8H4L6 1.5L8.5 12.5L10.5 5L12 9H16.5" fill="none" stroke="#2b55c8" stroke-width="1.6" stroke-linejoin="round"/></svg>
<div class="t" style="top:307.00px;font-size:11.5px;line-height:14px;color:#3c3c3c;left:940.8px;"><u>S</u>tatus</div>
<div class="b " style="left:832px;top:330px;width:424px;height:376px;background:#fff;border:1px solid #a8a8a8;"></div>
<div class="b " style="left:833px;top:331px;width:422px;height:19px;background:linear-gradient(#ffffff,#f6f6f6 50%,#e6e6e6);border-bottom:1px solid #cfcfcf;"></div>
<div class="b " style="left:1055.7px;top:332px;width:1.0px;height:17px;background:#d8d8d8;"></div>
<div class="t" style="top:334.00px;font-size:11.5px;line-height:14px;color:#3c3c3c;left:836.6px;">Description</div>
<div class="t" style="top:334.00px;font-size:11.5px;line-height:14px;color:#3c3c3c;left:1060px;">Value</div>
<div class="t" style="top:351.00px;font-size:11.5px;line-height:14px;color:#3c3c3c;left:856.3px;">Server name:</div>
<div class="t" style="top:351.00px;font-size:11.5px;line-height:14px;color:#3c3c3c;left:1059.3px;">(default)</div>
<div class="b " style="left:833px;top:365.36px;width:422px;height:14.659999999999968px;background:#efefef;"></div>
<div class="t" style="top:366.00px;font-size:11.5px;line-height:14px;color:#3c3c3c;left:856.3px;">Server state:</div>
<div class="t" style="top:366.00px;font-size:11.5px;line-height:14px;color:#3c3c3c;left:1059.3px;">Started</div>
<div class="t" style="top:380.00px;font-size:11.5px;line-height:14px;color:#3c3c3c;left:856.3px;">DSP Load:</div>
<div class="t" style="top:380.00px;font-size:11.5px;line-height:14px;color:#3c3c3c;left:1059.3px;">12.2 %</div>
<div class="b " style="left:833px;top:394.68px;width:422px;height:14.659999999999968px;background:#efefef;"></div>
<div class="t" style="top:395.00px;font-size:11.5px;line-height:14px;color:#3c3c3c;left:856.3px;">Sample Rate:</div>
<div class="t" style="top:395.00px;font-size:11.5px;line-height:14px;color:#3c3c3c;left:1059.3px;">192000 Hz</div>
<div class="t" style="top:410.00px;font-size:11.5px;line-height:14px;color:#3c3c3c;left:856.3px;">Buffer Size:</div>
<div class="t" style="top:410.00px;font-size:11.5px;line-height:14px;color:#3c3c3c;left:1059.3px;">512 frames</div>
<div class="b " style="left:833px;top:424.0px;width:422px;height:14.660000000000025px;background:#efefef;"></div>
<div class="t" style="top:424.00px;font-size:11.5px;line-height:14px;color:#3c3c3c;left:856.3px;">Realtime Mode:</div>
<div class="t" style="top:424.00px;font-size:11.5px;line-height:14px;color:#3c3c3c;left:1059.3px;">Yes</div>
<div class="t" style="top:439.00px;font-size:11.5px;line-height:14px;color:#3c3c3c;left:856.3px;">Transport state:</div>
<div class="t" style="top:439.00px;font-size:11.5px;line-height:14px;color:#3c3c3c;left:1059.3px;">Stopped</div>
<div class="b " style="left:833px;top:453.32px;width:422px;height:14.660000000000025px;background:#efefef;"></div>
<div class="t" style="top:454.00px;font-size:11.5px;line-height:14px;color:#3c3c3c;left:856.3px;">XRUN count since last server startup:</div>
<div class="t" style="top:454.00px;font-size:11.5px;line-height:14px;color:#3c3c3c;left:1059.3px;">18 (22)</div>
<div class="t" style="top:468.00px;font-size:11.5px;line-height:14px;color:#3c3c3c;left:873.5999999999999px;">XRUN last time detected:</div>
<div class="t" style="top:468.00px;font-size:11.5px;line-height:14px;color:#3c3c3c;left:1059.3px;">09:57:52 (00:02:26)</div>
<div class="b " style="left:833px;top:482.64px;width:422px;height:14.660000000000025px;background:#efefef;"></div>
<div class="t" style="top:483.00px;font-size:11.5px;line-height:14px;color:#3c3c3c;left:873.5999999999999px;">XRUN last:</div>
<div class="t" style="top:483.00px;font-size:11.5px;line-height:14px;color:#3c3c3c;left:1059.3px;">3.028 msec</div>
<div class="t" style="top:498.00px;font-size:11.5px;line-height:14px;color:#3c3c3c;left:873.5999999999999px;">XRUN maximum:</div>
<div class="t" style="top:498.00px;font-size:11.5px;line-height:14px;color:#3c3c3c;left:1059.3px;">3.028 msec</div>
<div class="b " style="left:833px;top:511.96px;width:422px;height:14.660000000000025px;background:#efefef;"></div>
<div class="t" style="top:512.00px;font-size:11.5px;line-height:14px;color:#3c3c3c;left:873.5999999999999px;">XRUN minimum:</div>
<div class="t" style="top:512.00px;font-size:11.5px;line-height:14px;color:#3c3c3c;left:1059.3px;">0 msec</div>
<div class="t" style="top:527.00px;font-size:11.5px;line-height:14px;color:#3c3c3c;left:873.5999999999999px;">XRUN average:</div>
<div class="t" style="top:527.00px;font-size:11.5px;line-height:14px;color:#3c3c3c;left:1059.3px;">2.21833 msec</div>
<div class="b " style="left:833px;top:541.28px;width:422px;height:14.660000000000082px;background:#efefef;"></div>
<div class="t" style="top:542.00px;font-size:11.5px;line-height:14px;color:#3c3c3c;left:873.5999999999999px;">XRUN total:</div>
<div class="t" style="top:542.00px;font-size:11.5px;line-height:14px;color:#3c3c3c;left:1059.3px;">39.93 msec</div>
<div class="t" style="top:556.00px;font-size:11.5px;line-height:14px;color:#3c3c3c;left:856.3px;">Maximum scheduling delay:</div>
<div class="t" style="top:556.00px;font-size:11.5px;line-height:14px;color:#3c3c3c;left:1059.3px;">3.028 msec</div>
<div class="b " style="left:833px;top:570.6px;width:422px;height:14.659999999999968px;background:#efefef;"></div>
<div class="t" style="top:571.00px;font-size:11.5px;line-height:14px;color:#3c3c3c;left:856.3px;">Time of last reset:</div>
<div class="t" style="top:571.00px;font-size:11.5px;line-height:14px;color:#3c3c3c;left:1059.3px;">09:30:19 (00:30:00)</div>
<div class="b " style="left:840px;top:441.99px;width:8px;height:8.0px;background:linear-gradient(#fff,#ececec);border:1px solid #b0b0b0;"></div>
<svg class="b" style="left:840px;top:441.99px" width="8" height="8" viewBox="0 0 8 8"><path d="M2 4H6 M4 2V6" stroke="#444" stroke-width="1"/></svg>
<div class="b " style="left:840px;top:456.65px;width:8px;height:8.0px;background:linear-gradient(#fff,#ececec);border:1px solid #b0b0b0;"></div>
<svg class="b" style="left:840px;top:456.65px" width="8" height="8" viewBox="0 0 8 8"><path d="M2 4H6" stroke="#444" stroke-width="1"/></svg>
<div class="b " style="left:833px;top:710px;width:71px;height:21px;background:linear-gradient(#ffffff,#f3f3f3 50%,#e2e2e2);border:1px solid #ababab;border-radius:3px;box-shadow:0 1px 0 rgba(255,255,255,.6);"></div>
<svg class="b" style="left:846px;top:714.5px" width="12" height="12" viewBox="0 0 12 12"><circle cx="6" cy="6" r="4.5" fill="#fdf6d8" stroke="#a83028" stroke-width="1.9"/></svg>
<div class="t" style="top:713.00px;font-size:11.5px;line-height:14px;color:#3c3c3c;left:861px;">Re<u>s</u>et</div>
<div class="b " style="left:1184px;top:710px;width:70px;height:21px;background:linear-gradient(#ffffff,#f3f3f3 50%,#e2e2e2);border:1px solid #ababab;border-radius:3px;box-shadow:0 1px 0 rgba(255,255,255,.6);"></div>
<svg class="b" style="left:1191px;top:713.5px" width="13" height="13" viewBox="0 0 13 13"><path d="M4.2 2.6A4.6 4.6 0 1 0 8.6 2.4" fill="none" stroke="#1d4f98" stroke-width="2.2"/><path d="M7 0.3L10.8 0.8L8.2 4.6Z" fill="#1d4f98"/></svg>
<div class="t" style="top:713.00px;font-size:11.5px;line-height:14px;color:#3c3c3c;left:1207px;"><u>R</u>efresh</div></div></body></html>
